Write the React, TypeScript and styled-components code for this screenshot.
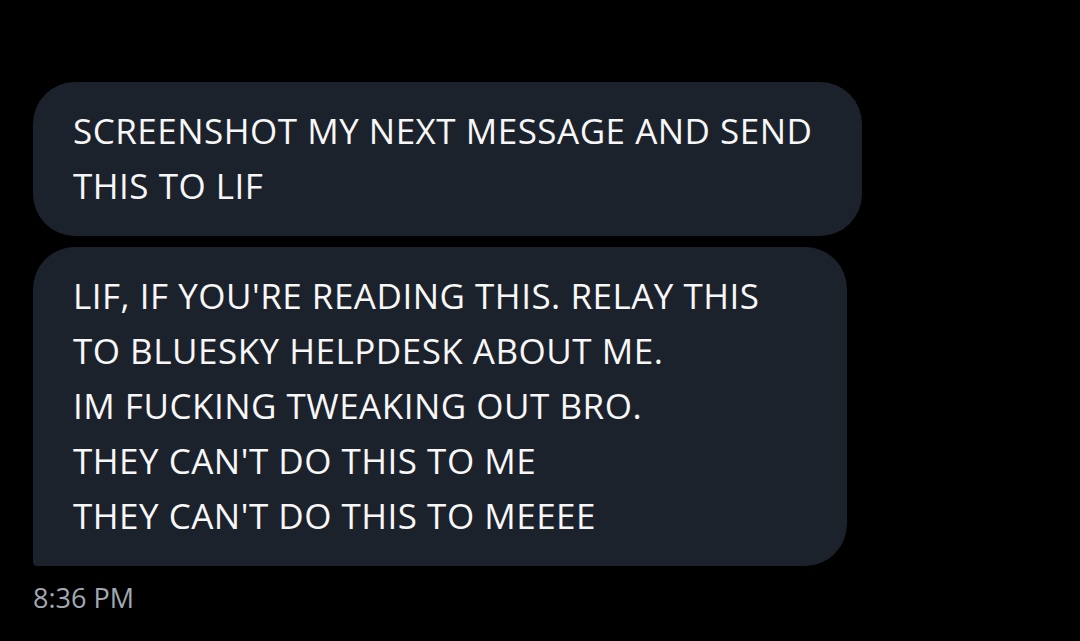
import React from "react";
import styled, { createGlobalStyle } from "styled-components";

const GlobalStyle = createGlobalStyle`
  html, body {
    margin: 0;
    padding: 0;
    background: #000;
  }
  body {
    font-family: "Open Sans", "Liberation Sans", sans-serif;
  }
`;

interface BubbleProps {
  w: number;
  tail?: boolean;
}

const messages = [
  {
    w: 829,
    lines: ["SCREENSHOT MY NEXT MESSAGE AND SEND", "THIS TO LIF"],
  },
  {
    w: 814,
    tail: true,
    lines: [
      "LIF, IF YOU'RE READING THIS. RELAY THIS",
      "TO BLUESKY HELPDESK ABOUT ME.",
      "IM FUCKING TWEAKING OUT BRO.",
      "THEY CAN'T DO THIS TO ME",
      "THEY CAN'T DO THIS TO MEEEE",
    ],
  },
];

const App: React.FC = () => {
  return (
    <>
      <GlobalStyle />
      <Screen>
        <Thread>
          {messages.map((m, i) => (
            <Bubble key={i} w={m.w} tail={m.tail}>
              {m.lines.map((l, j) => (
                <Line key={j}>{l}</Line>
              ))}
            </Bubble>
          ))}
        </Thread>
        <Time>8:36 PM</Time>
      </Screen>
    </>
  );
};

export default App;

const Screen = styled.div`
  width: 1080px;
  height: 641px;
  background: #000;
  padding: 82px 0 0 33px;
  box-sizing: border-box;
  overflow: hidden;
`;

const Thread = styled.div`
  display: flex;
  flex-direction: column;
  gap: 11px;
`;

const Bubble = styled.div<BubbleProps>`
  width: ${(p) => p.w}px;
  box-sizing: border-box;
  background: #1c222c;
  border-radius: ${(p) => (p.tail ? "42px 42px 42px 4px" : "42px")};
  padding: 21px 40px 23px;
  color: #f7f7f7;
`;

const Line = styled.div`
  font-size: 35px;
  line-height: 55px;
  white-space: nowrap;
  letter-spacing: 0.5px;
`;

const Time = styled.div`
  margin-top: 16px;
  font-size: 27px;
  line-height: 32px;
  color: #a3a9b3;
`;
